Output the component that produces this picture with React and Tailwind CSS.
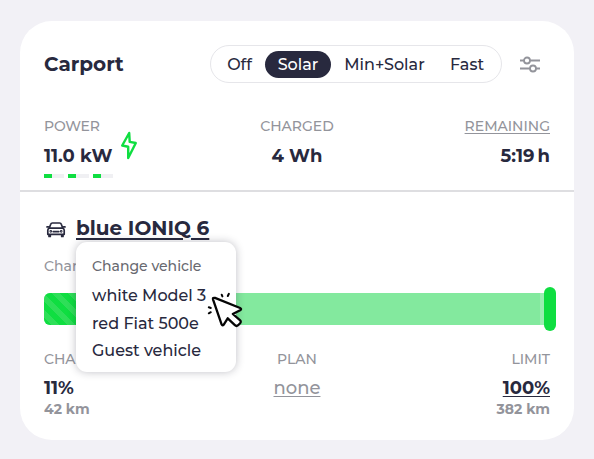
const MODES = [
  { name: "Off", style: "w-[54px] pl-[3px]" },
  { name: "Solar", style: "w-[66px] rounded-full bg-[#28293e] text-white" },
  { name: "Min+Solar", style: "w-[107px]" },
  { name: "Fast", style: "w-[58px]" },
];

function ModeSwitch() {
  return (
    <div className="flex h-[38px] w-[292px] items-center rounded-full border-[1.5px] border-[#e6e6ea] text-[16px] font-medium">
      {MODES.map((m) => (
        <button key={m.name} className={`flex h-[27px] shrink-0 items-center justify-center whitespace-nowrap pt-px ${m.style}`}>
          {m.name}
        </button>
      ))}
    </div>
  );
}

function SettingsIcon() {
  return (
    <svg width="22" height="18" viewBox="0 0 22 18" fill="none" stroke="#93949b" strokeWidth="1.8">
      <path d="M1 5.5h4M11 5.5h10M1 13.5h10M17 13.5h4" />
      <circle cx="8" cy="5.5" r="3" />
      <circle cx="14" cy="13.5" r="3" />
    </svg>
  );
}

function CarIcon() {
  return (
    <svg className="relative top-px" width="20" height="16" viewBox="0 0 20 16" fill="none" stroke="#28293e" strokeWidth="1.7" strokeLinecap="round" strokeLinejoin="round">
      <path d="M3.2 6.2 4.7 2.2Q5.1 1 6.4 1h7.2q1.3 0 1.7 1.2l1.5 4M3.2 6.2h13.6q1.4.6 1.4 2v4.1H1.8V8.2q0-1.4 1.4-2ZM1 4.9h1.4M17.6 4.9H19M3 12.5v2h1.3v-2M15.7 12.5v2H17v-2M7.2 9.6h5.6" />
      <circle cx="4.8" cy="9.3" r=".5" />
      <circle cx="15.2" cy="9.3" r=".5" />
    </svg>
  );
}

function Cursor() {
  return (
    <svg className="absolute left-[130px] top-[48px]" width="40" height="40" viewBox="0 0 40 40" fill="none" stroke="#050505" strokeLinecap="round" strokeLinejoin="round">
      <path d="M7 9.3 15.7 34.6q.8 1.6 1.9.2l4.1-6.5 7.2 6.9q1.6 1.5 3.2 0l2-2q1.4-1.6-.2-3l-7.1-6.2 7.3-3.8q2-1.3 0-2.2L9 7.9Q6.5 7.4 7 9.3Z" fill="white" strokeWidth="2.3" />
      <path d="m16.4 6.4-.7-1.7M21.8 6l1.1-2.2M4.8 18l-2-.7M4.8 22.2l-2 1.1" strokeWidth="2" />
    </svg>
  );
}

function VehicleMenu() {
  return (
    <div className="absolute left-8 top-[29px] h-[130px] w-[160px] rounded-[11px] bg-white pl-4 pt-[14px] text-[16px] font-medium shadow-[0_0_9px_rgba(30,30,50,0.28)]">
      <div className="h-[25px] whitespace-nowrap text-[14px] leading-[20px] text-[#686970]">Change vehicle</div>
      <div className="h-[28px] whitespace-nowrap leading-[30px]">white Model 3</div>
      <div className="h-[27px] whitespace-nowrap leading-[30px]">red Fiat 500e</div>
      <div className="h-[28px] whitespace-nowrap leading-[30px]">Guest vehicle</div>
      <Cursor />
    </div>
  );
}

export default function App() {
  return (
    <div className="h-[459px] w-[594px] bg-[#f2f1f6] px-5 pt-[21px] font-['Montserrat','Inter',sans-serif] text-[#28293e]">
      <main className="h-[419px] w-[554px] rounded-[32px] bg-white">
        <section className="h-[171px] border-b-2 border-[#dedee1] px-6 pt-6">
          <header className="flex h-[38px] items-center">
            <h1 className="w-[166px] text-[20px] font-bold">Carport</h1>
            <ModeSwitch />
            <div className="ml-[17px]"><SettingsIcon /></div>
          </header>
          <div className="mt-[33px] grid grid-cols-3 whitespace-nowrap text-[14px] font-medium leading-[20px] text-[#93949b]">
            <div>
              <div className="tracking-[-0.2px]">POWER</div>
              <div className="mt-[7px] flex h-[24px]">
                <span className="w-[76px] text-[18px] font-bold leading-[26px] text-[#28293e]">11.0 kW</span>
                <svg className="-mt-[12px]" width="18" height="29" viewBox="0 0 18 29" fill="none" stroke="#0fde41" strokeWidth="2.4" strokeLinecap="round" strokeLinejoin="round">
                  <path d="m9.2 2-7 12.5 6 1.2V27l7.6-15-6.1-1.1Z" />
                </svg>
              </div>
              <div className="mt-[7px] flex w-[69px] gap-1">
                {[0, 1, 2].map((i) => (
                  <div key={i} className="h-1 flex-1 bg-[#f0f0f3]"><div className="h-full w-2 bg-[#0fde41]" /></div>
                ))}
              </div>
            </div>
            <div className="text-center">
              <div>CHARGED</div>
              <div className="mt-[7px] text-[18px] font-bold leading-[26px] text-[#28293e]">4 Wh</div>
            </div>
            <div className="text-right">
              <div className="underline underline-offset-2">REMAINING</div>
              <div className="mt-[7px] text-[18px] font-bold leading-[26px] text-[#28293e]">5:19<span className="ml-[3px]">h</span></div>
            </div>
          </div>
        </section>
        <section className="px-6 pt-[21px]">
          <div className="relative">
            <div className="flex h-[32px] items-center">
              <div className="ml-0.5 w-[30px]"><CarIcon /></div>
              <h2 className="-mt-[3px] whitespace-nowrap text-[20px] font-bold underline decoration-2 underline-offset-[3px]">blue IONIQ 6</h2>
            </div>
            <div className="mt-[11px] h-[20px] text-[14px] font-medium leading-[20px] text-[#93949b]">Charging…</div>
            <div className="mt-[17px] flex h-[32px] w-[506px] rounded-[6px] bg-[#83e99e]">
              <div className="w-[56px] rounded-l-[6px] bg-[repeating-linear-gradient(45deg,#0fde41_0px,#0fde41_5.6px,#2edf58_5.6px,#2edf58_11.3px)]" />
              <div className="ml-auto w-[4px] shrink-0 bg-[#9aeeb1]" />
              <div className="-mr-[6px] -mt-[6px] h-[44px] w-[12px] shrink-0 rounded-full bg-[#0fde41]" />
            </div>
            <VehicleMenu />
          </div>
          <div className="mt-[24px] grid grid-cols-3 whitespace-nowrap text-[14px] font-medium leading-[20px] text-[#93949b]">
            <div>
              <div>CHARGE</div>
              <div className="mt-[7px] text-[18px] font-bold leading-[24px] text-[#28293e]">11%</div>
              <div className="-mt-[1px] font-bold">42 km</div>
            </div>
            <div className="text-center">
              <div>PLAN</div>
              <div className="mt-[7px] text-[18px] leading-[24px] underline underline-offset-2">none</div>
            </div>
            <div className="text-right">
              <div>LIMIT</div>
              <div className="mt-[7px] text-[18px] font-bold leading-[24px] text-[#28293e] underline underline-offset-2">100%</div>
              <div className="-mt-[1px] font-bold">382 km</div>
            </div>
          </div>
        </section>
      </main>
    </div>
  );
}
